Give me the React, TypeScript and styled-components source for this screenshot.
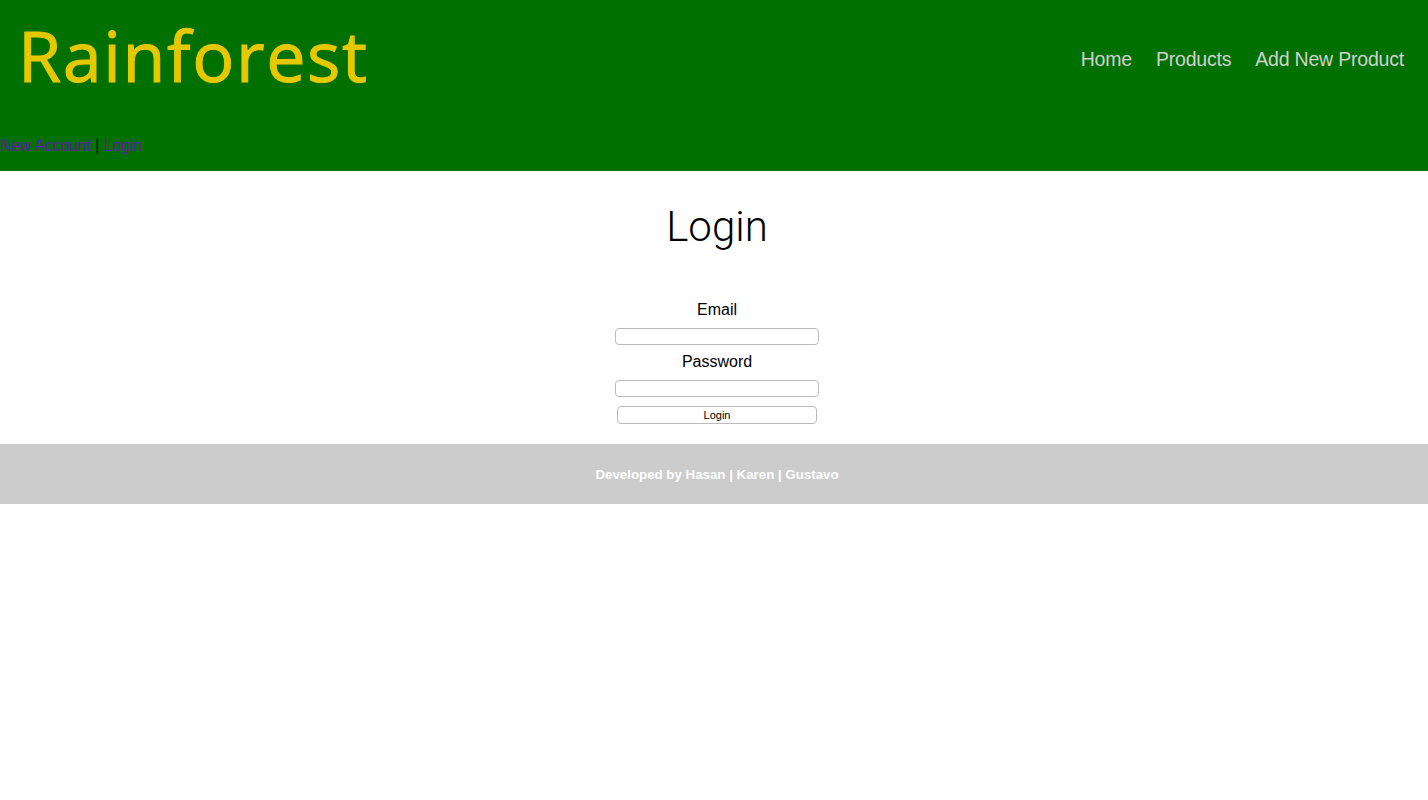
import React from "react";
import styled, { createGlobalStyle } from "styled-components";

const Global = createGlobalStyle`
  html, body { margin: 0; padding: 0; background: #fff; }
  body { font-family: "Liberation Sans", Arial, sans-serif; }
`;

const Header = styled.header`
  background: #007000;
  height: 171px;
  display: flex;
  flex-direction: column;
`;

const TopRow = styled.div`
  display: flex;
  align-items: center;
  justify-content: space-between;
  height: 118px;
  padding: 0 24px 0 18px;
`;

const Brand = styled.h1`
  margin: 0;
  font-family: "Open Sans", sans-serif;
  font-weight: 400;
  font-size: 70px;
  line-height: 1;
  color: #e6c800;
  letter-spacing: 1.6px;
  -webkit-text-stroke: 1px #e6c800;
  transform: translateY(-4px);
`;

const Nav = styled.nav`
  display: flex;
  gap: 24px;
`;

const NavLink = styled.a`
  color: #d0d0d0;
  font-size: 19.5px;
  text-decoration: none;
  letter-spacing: -0.2px;
`;

const AccountBar = styled.div`
  font-size: 15.6px;
  color: #000;
  padding-top: 19px;
`;

const AccountLink = styled.a`
  color: #6218b0;
  text-decoration: none;
`;

const Main = styled.main`
  display: flex;
  flex-direction: column;
  align-items: center;
  padding: 32px 0 20px 6px;
`;

const Title = styled.h2`
  margin: 0 0 49px;
  font-family: Roboto, "Liberation Sans", sans-serif;
  font-size: 42px;
  font-weight: 300;
  line-height: 48px;
  color: #000;
`;

const Form = styled.form`
  display: flex;
  flex-direction: column;
  align-items: center;
`;

const Label = styled.label`
  font-size: 16px;
  line-height: 20px;
  margin-bottom: 8px;
`;

const Input = styled.input`
  box-sizing: border-box;
  width: 204px;
  height: 17px;
  border: 1px solid #bbb;
  border-radius: 4px;
  margin: 0 0 7px;
  padding: 0;
`;

const Button = styled.button`
  box-sizing: border-box;
  width: 200px;
  height: 18px;
  border: 1px solid #bbb;
  border-radius: 4px;
  background: #fff;
  font-family: "Liberation Sans", Arial, sans-serif;
  font-size: 11px;
  padding: 0;
  margin-top: 2px;
  color: #000;
`;

const Footer = styled.footer`
  background: #cccccc;
  height: 60px;
  display: flex;
  align-items: center;
  justify-content: center;
  padding-left: 6px;
  color: #fff;
  font-weight: 700;
  font-size: 13.3px;
`;

export default function App() {
  return (
    <>
      <Global />
      <Header>
        <TopRow>
          <Brand>Rainforest</Brand>
          <Nav>
            <NavLink href="#">Home</NavLink>
            <NavLink href="#">Products</NavLink>
            <NavLink href="#">Add New Product</NavLink>
          </Nav>
        </TopRow>
        <AccountBar>
          <AccountLink href="#">New Account</AccountLink> | <AccountLink href="#">Login</AccountLink>
        </AccountBar>
      </Header>
      <Main>
        <Title>Login</Title>
        <Form onSubmit={(e) => e.preventDefault()}>
          <Label>Email</Label>
          <Input type="email" />
          <Label>Password</Label>
          <Input type="password" />
          <Button type="submit">Login</Button>
        </Form>
      </Main>
      <Footer>Developed by Hasan | Karen | Gustavo</Footer>
    </>
  );
}
